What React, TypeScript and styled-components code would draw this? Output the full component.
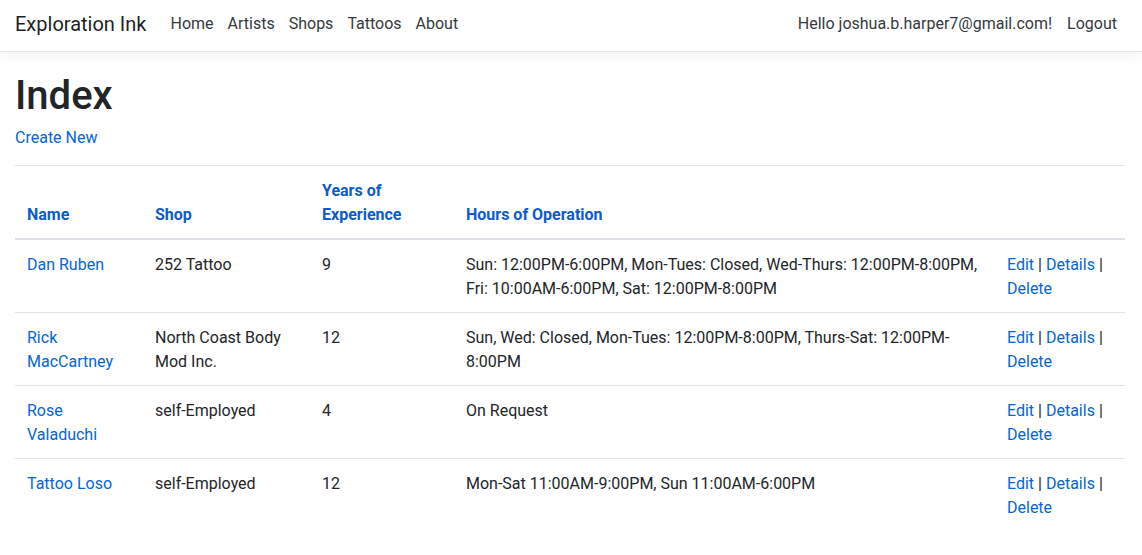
import React from "react";
import styled, { createGlobalStyle } from "styled-components";

const GlobalStyle = createGlobalStyle`
  html, body { margin: 0; background: #fff; }
  body {
    font-family: Roboto, "Noto Sans", sans-serif;
    font-size: 16px;
    line-height: 1.5;
    color: #212529;
  }
  a { color: #0366d6; text-decoration: none; }
`;

const NavBar = styled.header`
  height: 52px;
  box-sizing: border-box;
  border-bottom: 1px solid #e5e5e5;
  box-shadow: 0 4px 12px rgba(0, 0, 0, 0.05);
  display: flex;
  align-items: center;
  padding: 0 18px 4px 15px;
  margin-bottom: 17px;
`;

const Brand = styled.a`
  font-size: 20px;
  line-height: 30px;
  color: rgba(0, 0, 0, 0.9);
  margin-right: 17px;
  white-space: nowrap;
`;

const NavList = styled.nav<{ $right?: boolean }>`
  display: flex;
  align-items: center;
  margin-left: ${(p) => (p.$right ? "auto" : "0")};
`;

const NavLink = styled.a`
  color: #343a40;
  padding: 8px 7px;
  white-space: nowrap;
`;

const NavText = styled.span`
  color: #343a40;
  padding: 8px;
  white-space: nowrap;
`;

const Main = styled.main`
  padding: 0 17px 0 15px;
`;

const Title = styled.h1`
  font-size: 40px;
  font-weight: 500;
  line-height: 1.2;
  margin: 0 0 6px;
  padding-top: 3px;
`;

const Para = styled.p`
  margin: 0 0 15px;
`;

const Table = styled.table`
  width: 100%;
  border-collapse: collapse;
  table-layout: fixed;
`;

const Th = styled.th`
  text-align: left;
  vertical-align: bottom;
  padding: 13px 12px 11px;
  border-top: 1px solid #dee2e6;
  border-bottom: 2px solid #dee2e6;
  font-weight: 700;
  a { color: #0a5ccc; }
`;

const Td = styled.td`
  vertical-align: top;
  padding: 13px 12px 11px;
  border-top: 1px solid #dee2e6;
`;

const cols = [128, 167, 144, 541, 130];

const rows = [
  {
    name: "Dan Ruben",
    shop: "252 Tattoo",
    years: "9",
    hours:
      "Sun: 12:00PM-6:00PM, Mon-Tues: Closed, Wed-Thurs: 12:00PM-8:00PM, Fri: 10:00AM-6:00PM, Sat: 12:00PM-8:00PM",
  },
  {
    name: "Rick MacCartney",
    shop: "North Coast Body Mod Inc.",
    years: "12",
    hours: "Sun, Wed: Closed, Mon-Tues: 12:00PM-8:00PM, Thurs-Sat: 12:00PM-8:00PM",
  },
  { name: "Rose Valaduchi", shop: "self-Employed", years: "4", hours: "On Request" },
  {
    name: "Tattoo Loso",
    shop: "self-Employed",
    years: "12",
    hours: "Mon-Sat 11:00AM-9:00PM, Sun 11:00AM-6:00PM",
  },
];

export default function App() {
  return (
    <>
      <GlobalStyle />
      <NavBar>
        <Brand href="#">Exploration Ink</Brand>
        <NavList>
          <NavLink href="#">Home</NavLink>
          <NavLink href="#">Artists</NavLink>
          <NavLink href="#">Shops</NavLink>
          <NavLink href="#">Tattoos</NavLink>
          <NavLink href="#">About</NavLink>
        </NavList>
        <NavList $right>
          <NavText>Hello joshua.b.harper7@gmail.com!</NavText>
          <NavLink href="#">Logout</NavLink>
        </NavList>
      </NavBar>
      <Main>
        <Title>Index</Title>
        <Para>
          <a href="#">Create New</a>
        </Para>
        <Table>
          <colgroup>
            {cols.map((w, i) => (
              <col key={i} style={{ width: w }} />
            ))}
          </colgroup>
          <thead>
            <tr>
              <Th><a href="#">Name</a></Th>
              <Th><a href="#">Shop</a></Th>
              <Th><a href="#">Years of Experience</a></Th>
              <Th><a href="#">Hours of Operation</a></Th>
              <Th></Th>
            </tr>
          </thead>
          <tbody>
            {rows.map((r) => (
              <tr key={r.name}>
                <Td><a href="#">{r.name}</a></Td>
                <Td>{r.shop}</Td>
                <Td>{r.years}</Td>
                <Td>{r.hours}</Td>
                <Td>
                  <a href="#">Edit</a> | <a href="#">Details</a> | <a href="#">Delete</a>
                </Td>
              </tr>
            ))}
          </tbody>
        </Table>
      </Main>
    </>
  );
}
